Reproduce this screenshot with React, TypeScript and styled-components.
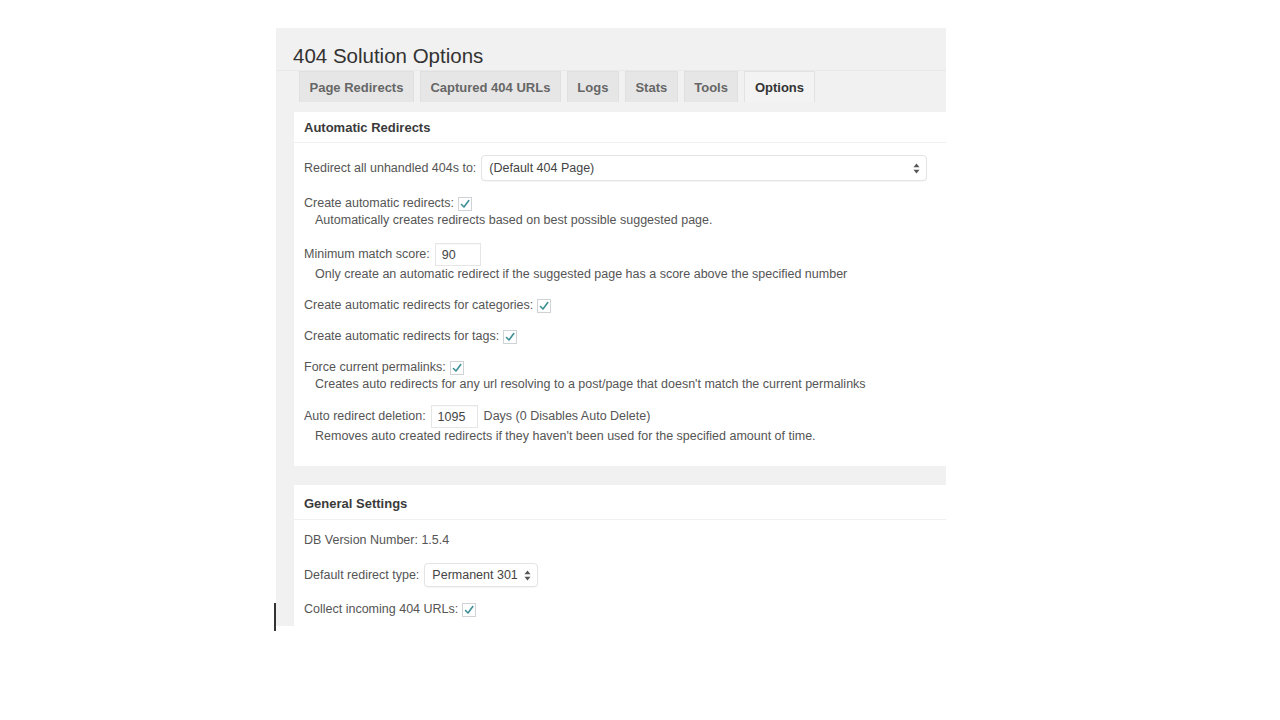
import React from 'react';
import styled, { createGlobalStyle } from 'styled-components';

const GlobalStyle = createGlobalStyle`
    html, body {
        margin: 0;
        padding: 0;
        background: #ffffff;
    }
    body {
        font-family: "Liberation Sans", Arial, Helvetica, sans-serif;
        color: #555;
    }
`;

const tabs = ['Page Redirects', 'Captured 404 URLs', 'Logs', 'Stats', 'Tools', 'Options'];

const Check: React.FC = () => (
    <CheckBox>
        <svg width="12" height="12" viewBox="0 0 12 12">
            <polyline points="2.5,6.5 5,9 9.8,2.6" fill="none" stroke="#3c8f97" strokeWidth="1.6" strokeLinecap="round" strokeLinejoin="round" />
        </svg>
    </CheckBox>
);

const Arrows: React.FC = () => (
    <svg width="7" height="11" viewBox="0 0 7 11">
        <polygon points="3.5,0.5 6.5,4.2 0.5,4.2" fill="#555" />
        <polygon points="3.5,10.5 6.5,6.8 0.5,6.8" fill="#555" />
    </svg>
);

const App: React.FC = () => {
    return (
        <>
            <GlobalStyle />
            <Page>
                <Frame>
                    <Title>404 Solution Options</Title>
                    <TabBar>
                        {tabs.map((tab) => (
                            <Tab key={tab} $active={tab === 'Options'}>{tab}</Tab>
                        ))}
                    </TabBar>

                    <Panel>
                        <PanelHeader>Automatic Redirects</PanelHeader>
                        <PanelBody>
                            <Field>
                                <Row>
                                    <Label>Redirect all unhandled 404s to:</Label>
                                    <Select $width={446} $height={26}>
                                        <span>(Default 404 Page)</span>
                                        <Arrows />
                                    </Select>
                                </Row>
                            </Field>
                            <Field>
                                <Row>
                                    <Label>Create automatic redirects:</Label>
                                    <Check />
                                </Row>
                                <Description>Automatically creates redirects based on best possible suggested page.</Description>
                            </Field>
                            <Field>
                                <Row>
                                    <Label>Minimum match score:</Label>
                                    <TextInput $width={46}>90</TextInput>
                                </Row>
                                <Description>Only create an automatic redirect if the suggested page has a score above the specified number</Description>
                            </Field>
                            <Field>
                                <Row>
                                    <Label>Create automatic redirects for categories:</Label>
                                    <Check />
                                </Row>
                            </Field>
                            <Field>
                                <Row>
                                    <Label>Create automatic redirects for tags:</Label>
                                    <Check />
                                </Row>
                            </Field>
                            <Field>
                                <Row>
                                    <Label>Force current permalinks:</Label>
                                    <Check />
                                </Row>
                                <Description>Creates auto redirects for any url resolving to a post/page that doesn't match the current permalinks</Description>
                            </Field>
                            <Field $tight>
                                <Row>
                                    <Label>Auto redirect deletion:</Label>
                                    <TextInput $width={47}>1095</TextInput>
                                    <Suffix>Days (0 Disables Auto Delete)</Suffix>
                                </Row>
                                <Description>Removes auto created redirects if they haven't been used for the specified amount of time.</Description>
                            </Field>
                        </PanelBody>
                    </Panel>

                    <Panel>
                        <PanelHeader $tall>General Settings</PanelHeader>
                        <PanelBody>
                            <Field>
                                <Row>
                                    <Label>DB Version Number: 1.5.4</Label>
                                </Row>
                            </Field>
                            <Field>
                                <Row>
                                    <Label>Default redirect type:</Label>
                                    <Select $width={114} $height={24}>
                                        <span>Permanent 301</span>
                                        <Arrows />
                                    </Select>
                                </Row>
                            </Field>
                            <Field>
                                <Row>
                                    <Label>Collect incoming 404 URLs:</Label>
                                    <Check />
                                </Row>
                            </Field>
                        </PanelBody>
                    </Panel>
                </Frame>
                <Caret />
            </Page>
        </>
    );
};

const Page = styled.div`
    position: relative;
    width: 1280px;
    height: 720px;
    padding: 28px 0 0 276px;
    box-sizing: border-box;
    overflow: hidden;
`;

const Frame = styled.div`
    width: 670px;
    height: 598px;
    background: #f1f1f1;
    overflow: hidden;
    display: flex;
    flex-direction: column;
`;

const Title = styled.h1`
    margin: 13px 0 0 17px;
    font-size: 20.5px;
    font-weight: 400;
    line-height: 29px;
    color: #333;
`;

const TabBar = styled.div`
    display: flex;
    gap: 6px;
    padding-left: 23px;
    border-top: 1px solid #e9e9e9;
    margin-bottom: 10px;
`;

const Tab = styled.div<{ $active?: boolean }>`
    height: 31px;
    display: flex;
    align-items: center;
    padding: 0 9.5px;
    font-size: 13px;
    font-weight: 700;
    color: ${({ $active }) => ($active ? '#333' : '#666')};
    background: ${({ $active }) => ($active ? '#f3f3f3' : '#e6e6e6')};
    border: 1px solid ${({ $active }) => ($active ? '#e2e2e2' : '#e0e0e0')};
    border-bottom: none;
    box-sizing: border-box;
`;

const Panel = styled.div`
    margin-left: 18px;
    background: #ffffff;
    flex-shrink: 0;

    & + & {
        margin-top: 19px;
    }
`;

const PanelHeader = styled.div<{ $tall?: boolean }>`
    height: ${({ $tall }) => ($tall ? '35px' : '31px')};
    padding: ${({ $tall }) => ($tall ? '2px' : '0')} 10px 0;
    display: flex;
    align-items: center;
    box-sizing: border-box;
    font-size: 13px;
    font-weight: 700;
    color: #3a3a3a;
    border-bottom: 1px solid #f0f0f0;
`;

const PanelBody = styled.div`
    padding: 12px 10px 7px;
`;

const Field = styled.div<{ $tight?: boolean }>`
    margin-top: ${({ $tight }) => ($tight ? '-2px' : '0')};
    margin-bottom: 14px;
`;

const Row = styled.div`
    display: flex;
    align-items: center;
    min-height: 17px;
    gap: 5px;
`;

const Label = styled.span`
    font-size: 12.5px;
    line-height: 17px;
    color: #555;
    white-space: nowrap;
`;

const Suffix = styled(Label)`
    margin-left: 1px;
`;

const Description = styled.div`
    padding-left: 11px;
    font-size: 12.5px;
    line-height: 17px;
    color: #555;
    white-space: nowrap;
`;

const CheckBox = styled.span`
    width: 14px;
    height: 14px;
    box-sizing: border-box;
    border: 1px solid #d0d3d6;
    background: #ffffff;
    display: inline-flex;
    align-items: center;
    justify-content: center;
    margin-left: -1px;
`;

const Select = styled.div<{ $width: number; $height: number }>`
    width: ${({ $width }) => $width}px;
    height: ${({ $height }) => $height}px;
    box-sizing: border-box;
    border: 1px solid #e4e4e4;
    border-radius: 4px;
    box-shadow: 0 1px 1px rgba(0, 0, 0, 0.04);
    display: flex;
    align-items: center;
    justify-content: space-between;
    padding: 0 6px 0 7px;
    font-size: 12.5px;
    color: #444;
    background: #ffffff;
`;

const TextInput = styled.div<{ $width: number }>`
    width: ${({ $width }) => $width}px;
    height: 23px;
    box-sizing: border-box;
    border: 1px solid #e6e6e6;
    box-shadow: inset 0 1px 1px rgba(0, 0, 0, 0.03);
    display: flex;
    align-items: center;
    padding: 0 6px;
    font-size: 12.5px;
    color: #444;
    background: #ffffff;
`;

const Caret = styled.div`
    position: absolute;
    left: 274px;
    top: 603px;
    width: 1.5px;
    height: 28px;
    background: #333;
`;

export default App;
